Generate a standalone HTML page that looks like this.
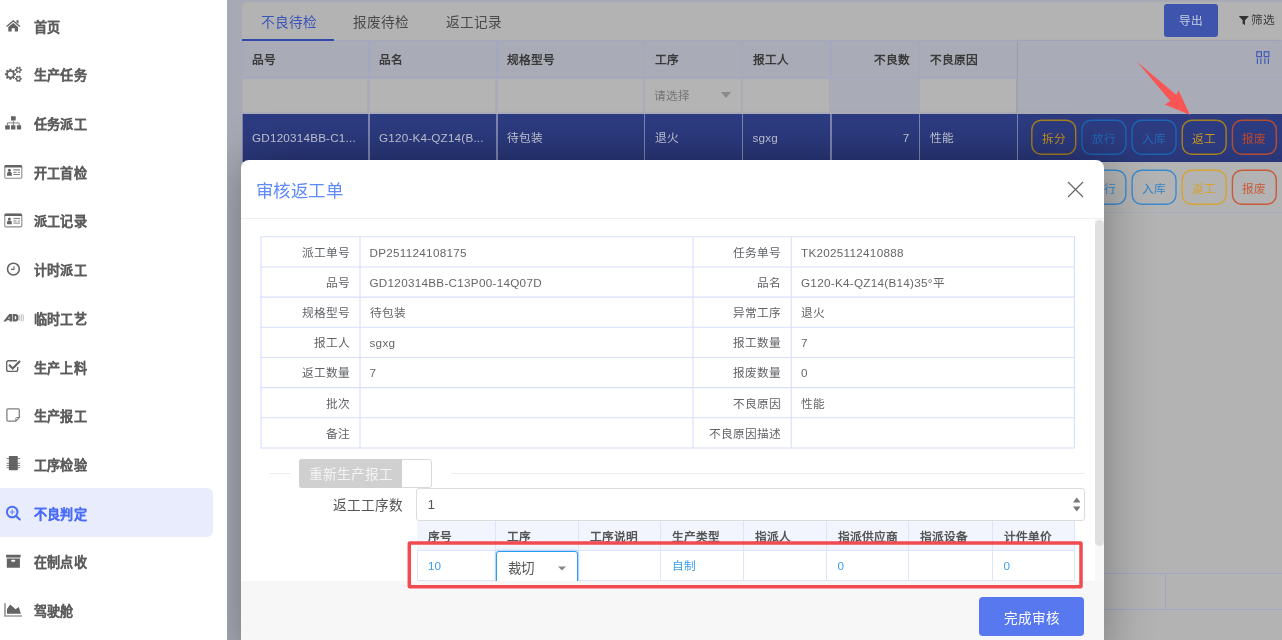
<!DOCTYPE html>
<html lang="zh-CN">
<head>
<meta charset="utf-8">
<title>不良判定</title>
<style>
*{box-sizing:border-box;margin:0;padding:0}
html,body{width:1282px;height:640px;overflow:hidden;background:#a7aab4;font-family:"Liberation Sans",sans-serif;}
#root{will-change:transform;position:relative;width:1282px;height:640px;overflow:hidden;background:#a7aab4}
#root div,#root svg{position:absolute}
#side{left:0;top:0;width:227px;height:640px;background:#fff}
.sel{left:0;width:212.5px;height:48.8px;background:#e8ecfc;border-radius:0 6px 6px 0}
.ico{left:3px}
.mi{left:33.8px;height:24px;line-height:24px;font-size:13.1px;font-weight:bold;letter-spacing:0.25px;-webkit-text-stroke:0.12px currentColor;white-space:nowrap}
#card{left:242px;top:2px;width:1046px;height:660px;background:#b3b3b3;border-radius:5px 0 0 0}
.tab{top:13px;height:20px;line-height:20px;font-size:13.7px;color:#4a4a4a;white-space:nowrap}
.hc{top:41px;height:35.5px;line-height:37px;background:#a9acb6;font-size:11.7px;font-weight:bold;color:#3a3a3a;white-space:nowrap}
.fc{top:78.5px;height:33px;background:#b4b4b4}
.rc{top:113.5px;height:48.5px;line-height:48.5px;font-size:11.7px;letter-spacing:0.2px;color:#c3c6d6;white-space:nowrap;background:linear-gradient(#2d3c82,#2c3a7e 65%,#293678)}
.ab{width:45.5px;height:35.5px;border:2px solid transparent;border-radius:10px;font-size:11.7px;line-height:33.5px;text-align:center;white-space:nowrap}
#modal{left:241px;top:160px;width:863px;height:500px;background:#fff;border-radius:8px;box-shadow:1px 1px 50px rgba(0,0,0,.33)}
.ir{left:19.5px;width:814px;height:30.17px;}
.il,.iv{top:0;height:30.17px;line-height:31.5px;font-size:11.7px;color:#606266;white-space:nowrap;}
.il{text-align:right;padding-right:10.3px;font-size:11.7px}
.iv{padding-left:9.5px;color:#666;letter-spacing:0.28px}
.gh{top:360.5px;height:29px;line-height:31.5px;background:#f2f4fe;font-size:11.7px;font-weight:bold;color:#555;padding-left:11px;white-space:nowrap;border-right:1px solid #dfe4fa}
.gd{top:390px;height:31px;line-height:30px;font-size:11.7px;color:#3a9ff0;padding-left:11px;white-space:nowrap;border-right:1px solid #dfe4fa;border-top:1px solid #dfe4fa;border-bottom:1px solid #dfe4fa}
</style>
</head>
<body>
<div id="root">
<div id="main" style="left:227px;top:0;width:1055px;height:640px;background:#a7aab4"></div>
<div id="card"></div>
<!-- tabs -->
<div class="tab" style="left:260.5px;color:#3a55b8">不良待检</div>
<div class="tab" style="left:353px">报废待检</div>
<div class="tab" style="left:445.5px">返工记录</div>
<div style="left:242px;top:40px;width:1040px;height:1px;background:#a3a8bd"></div>
<div style="left:242px;top:38.8px;width:92px;height:2px;background:#3148ad"></div>
<!-- toolbar -->
<div style="left:1163.5px;top:3.5px;width:54px;height:33px;background:#3f54ac;border-radius:3px;color:#c9cde0;font-size:11.7px;line-height:34.2px;text-align:center">导出</div>
<svg style="left:1239.3px;top:15.7px" width="9.6" height="9.5" viewBox="0 0 9.6 9.5"><path d="M0.3 0h9a0.3 0.3 0 0 1 0.2 0.5L6 4.3V9.3L3.6 7.4V4.3L0.1 0.5A0.3 0.3 0 0 1 0.3 0z" fill="#333"/></svg>
<div style="left:1250.5px;top:10px;height:20px;line-height:20px;font-size:11.7px;color:#3c3c3c;white-space:nowrap">筛选</div>
<!-- grid background strip (borders) -->
<div style="left:242px;top:41px;width:1040px;height:172px;background:#a2a7c2"></div>
<div style="left:242px;top:77px;width:1040px;height:36.5px;background:#a9acb6"></div>
<div style="left:1017.5px;top:41px;width:264.5px;height:72.5px;background:#a9acb6;box-shadow:-2px 0 3px rgba(0,0,0,.08)"></div>
<div style="left:242px;top:76.5px;width:1040px;height:1px;background:#a2a7c2"></div>
<div style="left:242px;top:162px;width:1040px;height:50px;background:#b3b3b3"></div><div style="left:242px;top:113.5px;width:1040px;height:48.5px;background:#7c85b0"></div>
<div class="hc" style="left:242.5px;width:125.5px;padding-left:9.5px;">品号</div>
<div class="fc" style="left:242.8px;width:124.7px"></div>
<div class="rc" style="left:242.5px;width:125.5px;padding-left:9.5px;">GD120314BB-C1...</div>
<div class="hc" style="left:369.5px;width:126.5px;padding-left:9.5px;">品名</div>
<div class="fc" style="left:369.8px;width:125.7px"></div>
<div class="rc" style="left:369.5px;width:126.5px;padding-left:9.5px;">G120-K4-QZ14(B...</div>
<div class="hc" style="left:497.5px;width:146px;padding-left:9.5px;">规格型号</div>
<div class="fc" style="left:497.8px;width:145.2px"></div>
<div class="rc" style="left:497.5px;width:146px;padding-left:9.5px;">待包装</div>
<div class="hc" style="left:645px;width:96.5px;padding-left:9.5px;">工序</div>
<div class="fc" style="left:645.3px;width:95.7px"></div>
<div class="rc" style="left:645px;width:96.5px;padding-left:9.5px;">退火</div>
<div class="hc" style="left:743px;width:87px;padding-left:9.5px;">报工人</div>
<div class="fc" style="left:743.3px;width:86.2px"></div>
<div class="rc" style="left:743px;width:87px;padding-left:9.5px;">sgxg</div>
<div class="hc" style="left:831.5px;width:87px;text-align:right;padding-right:9px;">不良数</div>
<div class="rc" style="left:831.5px;width:87px;text-align:right;padding-right:9px;">7</div>
<div class="hc" style="left:920px;width:96.5px;padding-left:9.5px;">不良原因</div>
<div class="fc" style="left:920.3px;width:95.7px"></div>
<div class="rc" style="left:920px;width:96.5px;padding-left:9.5px;">性能</div>
<div class="hc" style="left:1018px;width:262.5px;padding-left:9.5px;"></div>
<div class="rc" style="left:1018px;width:262.5px;padding-left:9.5px;"></div>
<div style="left:1016px;top:113.5px;width:266px;height:48.5px;background:linear-gradient(#2d3c82,#2c3a7e 65%,#293678)"></div><div style="left:1017px;top:113.5px;width:1px;height:48.5px;background:#7c85b0"></div>
<div style="left:654px;top:86px;height:20px;line-height:20px;font-size:11.7px;color:#777;white-space:nowrap">请选择</div>
<svg style="left:721px;top:92px" width="10" height="6" viewBox="0 0 10 6"><path d="M0 0h10L5 6z" fill="#8a8a8a"/></svg>
<svg style="left:1255.8px;top:50.5px" width="14" height="13.6" viewBox="0 0 15 14" preserveAspectRatio="none"><g fill="none" stroke="#3d56b8" stroke-width="1.2"><rect x="0.8" y="0.8" width="5" height="5"/><rect x="8.8" y="0.8" width="5" height="5"/><path d="M1.5 7.5v6M5.2 7.5v6M9.5 7.5v6M13.2 7.5v6"/></g></svg>
<svg style="left:1020px;top:110px" width="262" height="105" viewBox="1020 110 262 105"><g fill="none" stroke-width="1.4"><rect x="1031.8" y="120.3" width="43.9" height="33.9" rx="9.5" stroke="#a5801f"/><rect x="1081.95" y="120.3" width="43.9" height="33.9" rx="9.5" stroke="#1d64b1"/><rect x="1132.1" y="120.3" width="43.9" height="33.9" rx="9.5" stroke="#1d64b1"/><rect x="1182.25" y="120.3" width="43.9" height="33.9" rx="9.5" stroke="#a5801f"/><rect x="1232.4" y="120.3" width="43.9" height="33.9" rx="9.5" stroke="#b64c30"/><rect x="1031.8" y="170.3" width="43.9" height="33.9" rx="9.5" stroke="#d4a436"/><rect x="1081.95" y="170.3" width="43.9" height="33.9" rx="9.5" stroke="#3a8ad0"/><rect x="1132.1" y="170.3" width="43.9" height="33.9" rx="9.5" stroke="#3a8ad0"/><rect x="1182.25" y="170.3" width="43.9" height="33.9" rx="9.5" stroke="#d4a436"/><rect x="1232.4" y="170.3" width="43.9" height="33.9" rx="9.5" stroke="#c85a3c"/></g></svg>
<div class="ab" style="left:1031px;top:119.5px;color:#c6941a">拆分</div>
<div class="ab" style="left:1081.2px;top:119.5px;color:#2068b8">放行</div>
<div class="ab" style="left:1131.3px;top:119.5px;color:#2068b8">入库</div>
<div class="ab" style="left:1181.5px;top:119.5px;color:#c9971b">返工</div>
<div class="ab" style="left:1231.6px;top:119.5px;color:#c24828">报废</div>
<div class="ab" style="left:1031px;top:169.5px;color:#d6a22c">拆分</div>
<div class="ab" style="left:1081.2px;top:169.5px;color:#3585cc">放行</div>
<div class="ab" style="left:1131.3px;top:169.5px;color:#3585cc">入库</div>
<div class="ab" style="left:1181.5px;top:169.5px;color:#d6a22c">返工</div>
<div class="ab" style="left:1231.6px;top:169.5px;color:#cc5838">报废</div>
<div style="left:1104px;top:212px;width:178px;height:1px;background:#a7acc2"></div>
<div style="left:1104px;top:573px;width:178px;height:1px;background:#a0a7c5"></div>
<div style="left:1104px;top:609px;width:178px;height:1px;background:#a0a7c5"></div>
<div style="left:1164.5px;top:573px;width:1px;height:36px;background:#a0a7c5"></div>
<!-- red arrow -->
<svg style="left:1130px;top:55px" width="70" height="65" viewBox="1130 55 70 65"><path d="M1137 61.7 L1176.3 95.1 L1178.6 90.4 L1190 115 L1164.9 104.5 L1170.4 101 Z" fill="#f95555"/></svg>

<!-- modal -->
<div id="modal">
  <div style="left:14.5px;top:17.75px;height:26px;line-height:26px;font-size:17.45px;letter-spacing:0.6px;color:#5f8af7;white-space:nowrap">审核返工单</div>
  <svg style="left:826px;top:21px" width="17" height="17" viewBox="0 0 17 17"><path d="M1 1l15 15M16 1L1 16" stroke="#666" stroke-width="1.2" fill="none"/></svg>
  <div style="left:0;top:57.5px;width:863px;height:1px;background:#f0f0f0"></div>
  <div style="left:853.5px;top:58.5px;width:9.5px;height:363px;background:#f8f8f8"></div>
  <div style="left:853.5px;top:60px;width:9.5px;height:326px;background:#e0e0e0;border-radius:5px"></div>
  <div class="ir" style="top:76.8px"><div class="il" style="left:0;width:99.5px">派工单号</div><div class="iv" style="left:99.5px;width:333px">DP251124108175</div><div class="il" style="left:432.5px;width:98.5px">任务单号</div><div class="iv" style="left:531px;width:283.5px">TK2025112410888</div></div>
<div class="ir" style="top:106.97px"><div class="il" style="left:0;width:99.5px">品号</div><div class="iv" style="left:99.5px;width:333px">GD120314BB-C13P00-14Q07D</div><div class="il" style="left:432.5px;width:98.5px">品名</div><div class="iv" style="left:531px;width:283.5px">G120-K4-QZ14(B14)35°平</div></div>
<div class="ir" style="top:137.14px"><div class="il" style="left:0;width:99.5px">规格型号</div><div class="iv" style="left:99.5px;width:333px">待包装</div><div class="il" style="left:432.5px;width:98.5px">异常工序</div><div class="iv" style="left:531px;width:283.5px">退火</div></div>
<div class="ir" style="top:167.31px"><div class="il" style="left:0;width:99.5px">报工人</div><div class="iv" style="left:99.5px;width:333px">sgxg</div><div class="il" style="left:432.5px;width:98.5px">报工数量</div><div class="iv" style="left:531px;width:283.5px">7</div></div>
<div class="ir" style="top:197.48px"><div class="il" style="left:0;width:99.5px">返工数量</div><div class="iv" style="left:99.5px;width:333px">7</div><div class="il" style="left:432.5px;width:98.5px">报废数量</div><div class="iv" style="left:531px;width:283.5px">0</div></div>
<div class="ir" style="top:227.65px"><div class="il" style="left:0;width:99.5px">批次</div><div class="iv" style="left:99.5px;width:333px"></div><div class="il" style="left:432.5px;width:98.5px">不良原因</div><div class="iv" style="left:531px;width:283.5px">性能</div></div>
<div class="ir" style="top:257.82px"><div class="il" style="left:0;width:99.5px">备注</div><div class="iv" style="left:99.5px;width:333px"></div><div class="il" style="left:432.5px;width:98.5px">不良原因描述</div><div class="iv" style="left:531px;width:283.5px"></div></div>
<svg style="left:0;top:0" width="863" height="300" viewBox="0 0 863 300"><g stroke="#d8dffc" stroke-width="1.1" fill="none"><path d="M19.5 76.8H834"/><path d="M19.5 106.97H834"/><path d="M19.5 137.14H834"/><path d="M19.5 167.31H834"/><path d="M19.5 197.48H834"/><path d="M19.5 227.65H834"/><path d="M19.5 257.82H834"/><path d="M19.5 287.99H834"/><path d="M20 76.8V288"/><path d="M119 76.8V288"/><path d="M452 76.8V288"/><path d="M550.3 76.8V288"/><path d="M833.5 76.8V288"/></g></svg>
  <!-- divider + switch -->
  <div style="left:29px;top:313px;width:20px;height:1px;background:#ececec"></div>
  <div style="left:210px;top:313px;width:634px;height:1px;background:#ececec"></div>
  <div style="left:58px;top:298.5px;width:133px;height:29px;border:1px solid #d9d9d9;border-radius:3px;background:#fff"></div>
  <div style="left:58px;top:298.5px;width:103px;height:29px;background:#d0d0d0;border-radius:3px 0 0 3px;color:#f4f4f4;font-size:13.7px;line-height:31px;padding-left:9.5px;white-space:nowrap">重新生产报工</div>
  <div style="left:92px;top:334px;height:24px;line-height:24px;font-size:13.6px;color:#555;white-space:nowrap">返工工序数</div>
  <div style="left:175px;top:328px;width:668.5px;height:32.5px;border:1px solid #dcdcdc;border-radius:3px;background:#fff;font-size:13.5px;color:#555;line-height:32px;padding-left:10.5px">1</div>
  <svg style="left:831.5px;top:337px" width="7.5" height="15" viewBox="0 0 9 15" preserveAspectRatio="none"><path d="M0 5.5h9L4.5 0.5zM0 9.5h9L4.5 14.5z" fill="#777"/></svg>
  <div style="left:175.5px;top:360.5px;width:658px;height:29.5px;background:#f2f4fe"></div>
  <div class="gh" style="left:176px;width:79px">序号</div>
<div class="gd" style="left:176px;width:79px">10</div>
<div class="gh" style="left:255px;width:82.75px">工序</div>
<div class="gd" style="left:255px;width:82.75px"></div>
<div class="gh" style="left:337.75px;width:82.5px">工序说明</div>
<div class="gd" style="left:337.75px;width:82.5px"></div>
<div class="gh" style="left:420.25px;width:82.5px">生产类型</div>
<div class="gd" style="left:420.25px;width:82.5px">自制</div>
<div class="gh" style="left:502.75px;width:82.75px">指派人</div>
<div class="gd" style="left:502.75px;width:82.75px"></div>
<div class="gh" style="left:585.5px;width:82.5px">指派供应商</div>
<div class="gd" style="left:585.5px;width:82.5px">0</div>
<div class="gh" style="left:668px;width:83.5px">指派设备</div>
<div class="gd" style="left:668px;width:83.5px"></div>
<div class="gh" style="left:751.5px;width:82.5px">计件单价</div>
<div class="gd" style="left:751.5px;width:82.5px">0</div>
  <div style="left:175.5px;top:390px;width:1px;height:31px;background:#dfe4fa"></div>
  <!-- select -->
  <div style="left:255px;top:391px;width:82px;height:34px;border:1px solid #2f9cf3;border-radius:3px;background:#fff;box-shadow:0 0 3px rgba(47,156,243,.6);font-size:13.5px;color:#555;line-height:33.5px;padding-left:11px;white-space:nowrap">裁切</div>
  <svg style="left:317px;top:405.5px" width="8" height="5" viewBox="0 0 8 5"><path d="M0 0.5h8L4 4.5z" fill="#888"/></svg>
  <!-- footer -->
  <div style="left:0;top:421px;width:863px;height:80px;background:#f7f7f7"></div>
  <div style="left:738.3px;top:436.8px;width:105px;height:39px;background:#5878f0;border-radius:4px;color:#fff;font-size:13.6px;line-height:43px;text-align:center;white-space:nowrap">完成审核</div>
  <!-- red highlight -->
  <svg style="left:160px;top:375px" width="690" height="60" viewBox="0 0 690 60"><rect x="8.3" y="8.05" width="671.7" height="43.8" fill="none" stroke="#f14a50" stroke-width="3.5" rx="0.5"/></svg>
</div>

<!-- sidebar -->
<div id="side">
<div class="mi" style="top:15.6px;color:#5c5c5c">首页</div>
<div class="mi" style="top:64.3px;color:#5c5c5c">生产任务</div>
<div class="mi" style="top:113px;color:#5c5c5c">任务派工</div>
<div class="mi" style="top:161.7px;color:#5c5c5c">开工首检</div>
<div class="mi" style="top:210.4px;color:#5c5c5c">派工记录</div>
<div class="mi" style="top:259.1px;color:#5c5c5c">计时派工</div>
<div class="mi" style="top:307.8px;color:#5c5c5c">临时工艺</div>
<div class="mi" style="top:356.5px;color:#5c5c5c">生产上料</div>
<div class="mi" style="top:405.2px;color:#5c5c5c">生产报工</div>
<div class="mi" style="top:453.9px;color:#5c5c5c">工序检验</div>
<div class="sel" style="top:488.25px"></div>
<div class="mi" style="top:502.6px;color:#4a6cf7">不良判定</div>
<div class="mi" style="top:551.3px;color:#5c5c5c">在制点收</div>
<div class="mi" style="top:600px;color:#5c5c5c">驾驶舱</div>
<svg id="icons" style="left:0;top:0" width="30" height="640" viewBox="0 0 30 640"><path fill="#636363" d="M13.25 19.9 L20.3 26 L19.5 27 L13.25 21.7 L7 27 L6.2 26 Z M16.4 20.2 h2.1 v3.6 l-2.1 -1.8z M13.25 22.9 L18 26.9 V31.4 H14.8 V28.3 H11.7 V31.4 H8.3 V26.9Z"/><path fill="#636363" fill-rule="evenodd" d="M15.91 73.29 L15.91 75.31 L14.57 75.34 L14.08 76.52 L15.01 77.48 L13.58 78.91 L12.62 77.98 L11.44 78.47 L11.41 79.81 L9.39 79.81 L9.36 78.47 L8.18 77.98 L7.22 78.91 L5.79 77.48 L6.72 76.52 L6.23 75.34 L4.89 75.31 L4.89 73.29 L6.23 73.26 L6.72 72.08 L5.79 71.12 L7.22 69.69 L8.18 70.62 L9.36 70.13 L9.39 68.79 L11.41 68.79 L11.44 70.13 L12.62 70.62 L13.58 69.69 L15.01 71.12 L14.08 72.08 L14.57 73.26Z M12.9 74.3 A2.5 2.5 0 1 0 7.9 74.3 A2.5 2.5 0 1 0 12.9 74.3Z"/><path fill="#636363" fill-rule="evenodd" d="M21.8 69.07 L21.8 70.73 L20.77 70.7 L20.28 71.55 L20.82 72.43 L19.38 73.26 L18.89 72.35 L17.91 72.35 L17.42 73.26 L15.98 72.43 L16.52 71.55 L16.03 70.7 L15 70.73 L15 69.07 L16.03 69.1 L16.52 68.25 L15.98 67.37 L17.42 66.54 L17.91 67.45 L18.89 67.45 L19.38 66.54 L20.82 67.37 L20.28 68.25 L20.77 69.1Z M19.7 69.9 A1.3 1.3 0 1 0 17.1 69.9 A1.3 1.3 0 1 0 19.7 69.9Z"/><path fill="#636363" fill-rule="evenodd" d="M21.8 77.92 L21.8 79.58 L20.77 79.55 L20.28 80.4 L20.82 81.28 L19.38 82.11 L18.89 81.2 L17.91 81.2 L17.42 82.11 L15.98 81.28 L16.52 80.4 L16.03 79.55 L15 79.58 L15 77.92 L16.03 77.95 L16.52 77.1 L15.98 76.22 L17.42 75.39 L17.91 76.3 L18.89 76.3 L19.38 75.39 L20.82 76.22 L20.28 77.1 L20.77 77.95Z M19.7 78.75 A1.3 1.3 0 1 0 17.1 78.75 A1.3 1.3 0 1 0 19.7 78.75Z"/><path fill="#636363" d="M11 116.3h4.7v4.2H11z M5.2 125.2h4.6v4.4H5.2z M11 125.2h4.4v4.4H11z M16.9 125.2h4.2v4.4h-4.2z"/><path fill="none" stroke="#777" stroke-width="0.9" d="M13.35 120.5v4.7 M7.5 125.2v-2.3h11.6v2.3"/><rect x="4.8" y="165.6" width="17" height="12.7" rx="1.2" fill="none" stroke="#8a8a8a" stroke-width="1.1"/><path fill="#636363" d="M4.6 166.4 q0-1.4 1.4-1.4h14.6q1.4 0 1.4 1.4v1H4.6z"/><circle cx="9.4" cy="170.3" r="1.5" fill="#636363"/><path fill="#636363" d="M7 175.7v-2.2q0-1.7 2.4-1.7t2.4 1.7v2.2z"/><path stroke="#8a8a8a" stroke-width="1.3" d="M13.4 169.9h6.6"/><path stroke="#636363" stroke-width="0.8" d="M13.4 172.4h3.2M18 172.4h2M13.4 174.5h6.6"/><rect x="4.8" y="214.2" width="17" height="12.7" rx="1.2" fill="none" stroke="#8a8a8a" stroke-width="1.1"/><path fill="#636363" d="M4.6 215 q0-1.4 1.4-1.4h14.6q1.4 0 1.4 1.4v1H4.6z"/><circle cx="9.4" cy="218.9" r="1.5" fill="#636363"/><path fill="#636363" d="M7 224.3v-2.2q0-1.7 2.4-1.7t2.4 1.7v2.2z"/><path stroke="#8a8a8a" stroke-width="1.3" d="M13.4 218.5h6.6"/><path stroke="#636363" stroke-width="0.8" d="M13.4 221h3.2M18 221h2M13.4 223.1h6.6"/><circle cx="13.4" cy="269.1" r="5.9" fill="none" stroke="#636363" stroke-width="1.6"/><path fill="none" stroke="#636363" stroke-width="1.05" d="M13.95 266.2v3.15h-2.95"/><g fill="#636363"><path fill-rule="evenodd" d="M3.3 321.5 L9.2 314 H12 V321.5 H9.6 V320.3 H6.9 L6.1 321.5Z M8 318.7 H9.6 V316.5Z"/><path fill-rule="evenodd" d="M12.6 314 H15.4 Q18.6 314 18.6 317.75 Q18.6 321.5 15.4 321.5 H12.6Z M14.8 316 V319.5 H15.3 Q16.3 319.5 16.3 317.75 Q16.3 316 15.3 316Z"/></g><path fill="none" stroke="#a5a5a5" stroke-width="0.7" d="M19.3 314.8q1.5 3 0 6M21 314.4q1.8 3.4 0 6.8M22.7 314q2 3.8 0 7.6"/><path fill="none" stroke="#636363" stroke-width="1.35" d="M16.9 360.7H8.6a1.9 1.9 0 0 0-1.9 1.9v6.8a1.9 1.9 0 0 0 1.9 1.9h7.2a1.9 1.9 0 0 0 1.9-1.9v-2.5"/><path fill="#636363" d="M8.3 365.5l1.5-1.5 2.9 2.9 6.6-6.6 1.5 1.5-8.1 8.1z"/><path fill="none" stroke="#7d7d7d" stroke-width="1.25" d="M7.9 408.9h10.4a1 1 0 0 1 1 1v7.7l-3.4 3.4H7.9a1 1 0 0 1-1-1v-10.1a1 1 0 0 1 1-1z"/><path fill="none" stroke="#7d7d7d" stroke-width="0.9" d="M19.2 417.5h-2.6a0.8 0.8 0 0 0-0.8 0.8v2.7"/><rect x="8.9" y="456" width="8.9" height="14.3" rx="0.6" fill="#636363"/><path stroke="#636363" stroke-width="0.8" d="M6.6 458.5h2.4M17.7 458.5h2.5"/><path stroke="#cfcfcf" stroke-width="0.8" d="M6.6 460.9h2.4M17.7 460.9h2.5"/><path stroke="#636363" stroke-width="0.8" d="M6.6 463.3h2.4M17.7 463.3h2.5"/><path stroke="#636363" stroke-width="0.8" d="M6.6 465.5h2.4M17.7 465.5h2.5"/><path stroke="#636363" stroke-width="0.8" d="M6.6 467.7h2.4M17.7 467.7h2.5"/><circle cx="12.2" cy="512" r="5.3" fill="none" stroke="#4b6ef6" stroke-width="2"/><path stroke="#4b6ef6" stroke-width="2.1" stroke-linecap="round" d="M16.3 516.3l3.5 3.2"/><path stroke="#4b6ef6" stroke-opacity="0.85" stroke-width="1.2" d="M9.6 512h5.2M12.2 509.4v5.2"/><path fill="#636363" d="M6.1 554.7h14.5v2.8H6.1z M6.8 558.7h13.1v9.1H6.8z"/><rect x="6.8" y="557.5" width="13.1" height="1.2" fill="#9a9a9a"/><rect x="11.25" y="559.8" width="3.95" height="1.9" rx="0.9" fill="#fff"/><path fill="#9c9c9c" d="M4.1 603.2h1.8v12h16.1v1.6H4.1z"/><path fill="#636363" d="M7 613.75V609l3.3-4.6 5.2 4.9 3.25-2.3 2.15 6.75z"/></svg>
</div>
</div>
</body>
</html>
